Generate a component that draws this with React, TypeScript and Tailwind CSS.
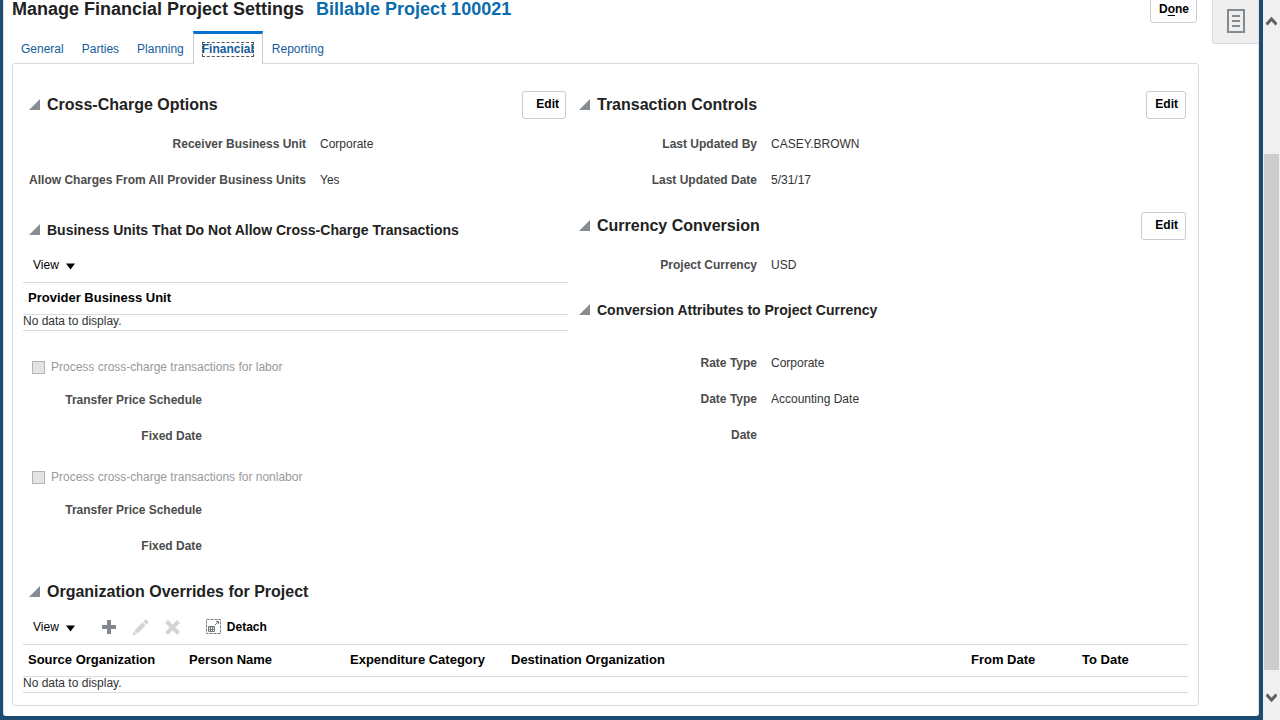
import React from 'react';

type ButtonProps = { spacing: string };

function Disclosure({ label }: { label: string }) {
  return (
    <button type="button" aria-label={label} aria-expanded="true" className="mb-0.5 shrink-0">
      <svg width="11" height="11" viewBox="0 0 11 11" className="block">
        <path d="M11 0V11H0Z" fill="#878c90" />
      </svg>
    </button>
  );
}

function EditButton({ spacing }: ButtonProps) {
  return (
    <button
      type="button"
      className={`h-7 rounded-[3px] border border-[#c4ced7] bg-white pb-0.5 text-xs font-bold text-black ${spacing}`}
    >
      Edit
    </button>
  );
}

function Heading({ title, edit, className = '' }: { title: string; edit?: string; className?: string }) {
  return (
    <div className={`flex h-7 items-center gap-[7px] pr-0.5 ${className}`}>
      <Disclosure label={title} />
      <h2 className="flex-1 text-base leading-5 font-bold text-[#222]">{title}</h2>
      {edit && <EditButton spacing={edit} />}
    </div>
  );
}

function SubHeading({ title, className = '' }: { title: string; className?: string }) {
  return (
    <div className={`flex h-7 items-center gap-[7px] ${className}`}>
      <Disclosure label={title} />
      <h3 className="text-sm leading-5 font-bold text-[#222]">{title}</h3>
    </div>
  );
}

function Field({ label, value = '', width }: { label: string; value?: string; width: string }) {
  return (
    <div className="flex h-9 items-center gap-3.5">
      <dt className={`text-right font-bold whitespace-nowrap text-[#4c4c4c] ${width}`}>{label}</dt>
      <dd className="text-[#333]">{value}</dd>
    </div>
  );
}

function ViewMenu() {
  return (
    <button type="button" className="flex items-center gap-[7px] text-black">
      View
      <svg width="9" height="7" viewBox="0 0 9 7" className="mt-0.5">
        <path d="M0 0.5H9L4.5 6.5Z" fill="#000" />
      </svg>
    </button>
  );
}

function DataTable({ columns }: { columns: { name: string; width: string }[] }) {
  return (
    <table className="w-full table-fixed border-collapse text-left">
      <thead>
        <tr className="h-8 border-y border-[#d3dce4]">
          {columns.map((c) => (
            <th key={c.name} scope="col" className={`p-0 pb-0.5 pl-[5px] text-[13px] leading-4 font-bold whitespace-nowrap text-black ${c.width}`}>
              {c.name}
            </th>
          ))}
        </tr>
      </thead>
      <tbody>
        <tr className="h-4 border-b border-[#d3dce4]">
          <td colSpan={columns.length} className="p-0 pb-[3px] leading-3 text-[#333]">
            No data to display.
          </td>
        </tr>
      </tbody>
    </table>
  );
}

function Processing({ id, label }: { id: string; label: string }) {
  return (
    <div>
      <div className="flex h-[30px] items-center gap-1.5 pl-[9px]">
        <input
          id={id}
          type="checkbox"
          disabled
          className="size-[13px] appearance-none border border-[#b3b3b3] bg-[#e4e4e4]"
        />
        <label htmlFor={id} className="text-[#999]">
          {label}
        </label>
      </div>
      <dl>
        <Field label="Transfer Price Schedule" width="w-[179px]" />
        <Field label="Fixed Date" width="w-[179px]" />
      </dl>
    </div>
  );
}

function Tab({ name, active }: { name: string; active?: boolean }) {
  return (
    <a
      href="#"
      aria-current={active ? 'page' : undefined}
      className={
        active
          ? 'flex items-center border-x border-t-[3px] border-x-[#c4ced7] border-t-[#0572ce] bg-white px-2 font-bold text-[#145c9e]'
          : 'flex items-center px-[9px] pt-[3px] text-[#145c9e]'
      }
    >
      <span className={active ? 'leading-[15px] outline-1 -outline-offset-1 outline-[#555] outline-dashed' : ''}>{name}</span>
    </a>
  );
}

function Toolbar() {
  return (
    <div className="flex h-[38px] items-center pt-1 pl-2.5">
      <ViewMenu />
      <button type="button" aria-label="Add" className="ml-[27px]">
        <svg width="15" height="15" viewBox="0 0 15 15" className="block">
          <path d="M5 0H9V5H14V9H9V14H5V9H0V5H5Z" fill="#84898d" />
        </svg>
      </button>
      <button type="button" aria-label="Modify" disabled className="ml-[15px]">
        <svg width="17" height="17" viewBox="0 0 17 17" className="block" fill="#d2d4d5">
          <path d="M0.5 16.5L2 12L5 15Z" />
          <path d="M2.4 11.4L10.5 3.3L13.7 6.5L5.6 14.6Z" />
          <path d="M11.3 2.5L13 0.8Q13.7 0.2 14.4 0.8L16.2 2.6Q16.8 3.3 16.2 4L14.5 5.7Z" />
        </svg>
      </button>
      <button type="button" aria-label="Delete" disabled className="ml-4">
        <svg width="15" height="15" viewBox="0 0 15 15" className="block">
          <path d="M1.5 1.5L13.5 13.5M13.5 1.5L1.5 13.5" stroke="#d2d4d5" strokeWidth="4" />
        </svg>
      </button>
      <button type="button" className="ml-[26px] flex items-center gap-1.5 font-bold text-black">
        <svg width="15" height="15" viewBox="0 0 15 15" className="mb-0.5 block" fill="none" stroke="#777c80">
          <rect x="0.5" y="0.5" width="14" height="14" strokeDasharray="3 1" />
          <path d="M9 6L12.5 2.5M10 2.5H12.5V5" />
          <path d="M2.5 7.5H8.5V12.5H2.5ZM2 8H9M2.5 10.5H8.5M4.5 8V12.5M6.5 8V12.5" />
        </svg>
        Detach
      </button>
    </div>
  );
}

function Scrollbar() {
  return (
    <div aria-hidden="true" className="flex w-[17px] shrink-0 flex-col items-center bg-[#f0f0f0]">
      <svg width="11" height="34" viewBox="0 0 11 34">
        <path d="M0.5 24.5L5.5 19L10.5 24.5" fill="none" stroke="#606060" strokeWidth="3" />
      </svg>
      <div className="grow-[120]" />
      <div className="w-[15px] grow-[516] bg-[#cdcdcd]" />
      <svg width="11" height="50" viewBox="0 0 11 50">
        <path d="M0.5 24.5L5.5 30L10.5 24.5" fill="none" stroke="#606060" strokeWidth="3" />
      </svg>
    </div>
  );
}

const overrideColumns = [
  { name: 'Source Organization', width: 'w-[161px]' },
  { name: 'Person Name', width: 'w-[161px]' },
  { name: 'Expenditure Category', width: 'w-[161px]' },
  { name: 'Destination Organization', width: '' },
  { name: 'From Date', width: 'w-[111px]' },
  { name: 'To Date', width: 'w-[111px]' },
];

export default function App() {
  return (
    <div className="flex min-h-screen bg-[#1e4b70] font-['Liberation_Sans',Arial,sans-serif] text-xs leading-4">
      <div className="mr-1 mb-1 ml-[3px] flex flex-1 overflow-hidden rounded-b-[3px] border-x border-[#dce3e8] bg-white">
        <main className="min-w-0 flex-1 pb-2.5 pl-2">
          <header className="-mt-[5px] flex h-7 items-center gap-3 pr-0.5">
            <h1 className="flex flex-1 gap-3 text-lg leading-6 font-bold text-[#222]">
              Manage Financial Project Settings
              <span className="text-[#0a6cad]">Billable Project 100021</span>
            </h1>
            <button type="button" className="h-7 rounded-[3px] border border-[#c4ced7] bg-white pr-[7px] pl-2 font-bold text-black">
              D<span className="underline underline-offset-2">o</span>ne
            </button>
          </header>

          <nav className="relative mt-2 -mb-px flex h-[33px]">
            <Tab name="General" />
            <Tab name="Parties" />
            <Tab name="Planning" />
            <Tab name="Financial" active />
            <Tab name="Reporting" />
          </nav>

          <section className="rounded-[3px] border border-[#d3dce4] px-2.5 pt-[27px] pb-3">
            <div className="grid grid-cols-[545fr_609fr] gap-x-[11px]">
              <div>
                <Heading title="Cross-Charge Options" edit="pl-[13px] pr-1.5" className="pl-1.5" />
                <dl className="mt-[7px]">
                  <Field label="Receiver Business Unit" value="Corporate" width="w-[283px]" />
                  <Field label="Allow Charges From All Provider Business Units" value="Yes" width="w-[283px]" />
                </dl>
                <SubHeading title="Business Units That Do Not Allow Cross-Charge Transactions" className="mt-[18px] pl-1.5" />
                <div className="flex h-[38px] items-center pt-1 pl-2.5">
                  <ViewMenu />
                </div>
                <DataTable columns={[{ name: 'Provider Business Unit', width: '' }]} />
                <div className="mt-[21px] flex flex-col gap-2">
                  <Processing id="labor" label="Process cross-charge transactions for labor" />
                  <Processing id="nonlabor" label="Process cross-charge transactions for nonlabor" />
                </div>
              </div>

              <div>
                <Heading title="Transaction Controls" edit="pl-2 pr-[7px]" />
                <dl className="mt-[7px]">
                  <Field label="Last Updated By" value="CASEY.BROWN" width="w-[178px]" />
                  <Field label="Last Updated Date" value="5/31/17" width="w-[178px]" />
                </dl>
                <Heading title="Currency Conversion" edit="pl-[13px] pr-[7px]" className="mt-3.5" />
                <dl className="mt-[7px]">
                  <Field label="Project Currency" value="USD" width="w-[178px]" />
                </dl>
                <SubHeading title="Conversion Attributes to Project Currency" className="mt-[13px]" />
                <dl className="mt-[21px]">
                  <Field label="Rate Type" value="Corporate" width="w-[178px]" />
                  <Field label="Date Type" value="Accounting Date" width="w-[178px]" />
                  <Field label="Date" width="w-[178px]" />
                </dl>
              </div>
            </div>

            <Heading title="Organization Overrides for Project" className="mt-3.5 pl-1.5" />
            <Toolbar />
            <DataTable columns={overrideColumns} />
          </section>
        </main>

        <aside className="ml-[13px]">
          <button
            type="button"
            aria-label="Details"
            className="flex h-11 w-[46px] items-center justify-center rounded-bl-[3px] border-b border-l border-[#d5dbe0] bg-[#efefef] pb-0.5"
          >
            <svg width="18" height="24" viewBox="0 0 18 24" fill="none" stroke="#84898d" strokeWidth="2">
              <path d="M1 1H17V23H1Z" />
              <path d="M5 7H13M5 12H13M5 17H13" />
            </svg>
          </button>
        </aside>
      </div>
      <Scrollbar />
    </div>
  );
}
